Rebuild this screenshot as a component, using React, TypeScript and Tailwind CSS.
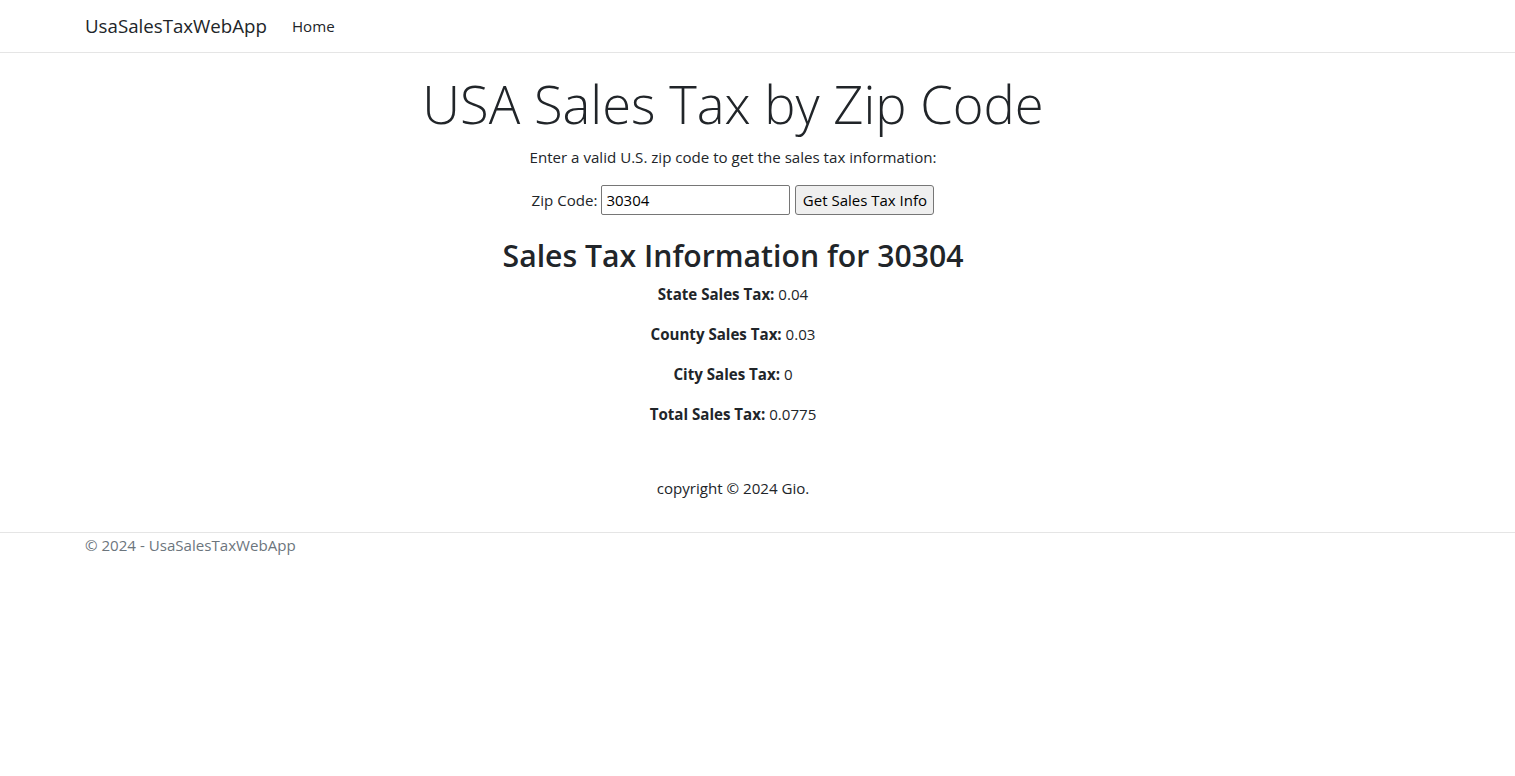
import React from "react";

export default function App() {
  const font = { fontFamily: '"Open Sans", "Noto Sans", sans-serif' };
  return (
    <div className="min-h-[776px] bg-white text-[#212529]" style={font}>
      <header className="h-[53px] border-b border-[#e5e5e5] bg-white">
        <div className="ml-[73px] flex h-[52px] w-[1320px] items-center px-3">
          <span className="text-[18.7px] leading-[30px] text-[#212529]">UsaSalesTaxWebApp</span>
          <span className="ml-[25px] text-[15.1px] leading-[24px] text-[#212529]">Home</span>
        </div>
      </header>
      <main className="ml-[73px] w-[1320px] px-3 pt-[17px] text-center">
        <h1 className="text-[52.5px] font-light leading-[67px]">USA Sales Tax by Zip Code</h1>
        <p className="mt-[8px] text-[15.1px] leading-[24px]">Enter a valid U.S. zip code to get the sales tax information:</p>
        <form className="mt-[16px] flex items-center justify-center" onSubmit={(e) => e.preventDefault()}>
          <label className="mr-[4px] text-[15.1px] leading-[24px]">Zip Code:</label>
          <input
            defaultValue="30304"
            className="h-[30px] w-[189px] rounded-[2px] border border-[#767676] px-[4px] text-[15px] text-black outline-none"
          />
          <button className="ml-[5px] h-[30px] w-[139px] rounded-[3px] border border-[#767676] bg-[#efefef] text-[15px] text-black">
            Get Sales Tax Info
          </button>
        </form>
        <h2 className="mt-[22px] text-[30.2px] font-semibold leading-[38px]">Sales Tax Information for 30304</h2>
        <div className="mt-[7px] text-[15.1px] leading-[24px]">
          <p className="mb-[16px]"><b className="font-bold">State Sales Tax:</b> 0.04</p>
          <p className="mb-[16px]"><b className="font-bold">County Sales Tax:</b> 0.03</p>
          <p className="mb-[16px]"><b className="font-bold">City Sales Tax:</b> 0</p>
          <p className="mb-[16px]"><b className="font-bold">Total Sales Tax:</b> 0.0775</p>
        </div>
        <p className="mt-[50px] pb-[32px] text-[15.1px] leading-[24px]">copyright © 2024 Gio.</p>
      </main>
      <footer className="border-t border-[#e5e5e5]">
        <div className="ml-[73px] w-[1320px] px-3 text-[15.1px] leading-[24px] text-[#6c757d]">© 2024 - UsaSalesTaxWebApp</div>
      </footer>
    </div>
  );
}
